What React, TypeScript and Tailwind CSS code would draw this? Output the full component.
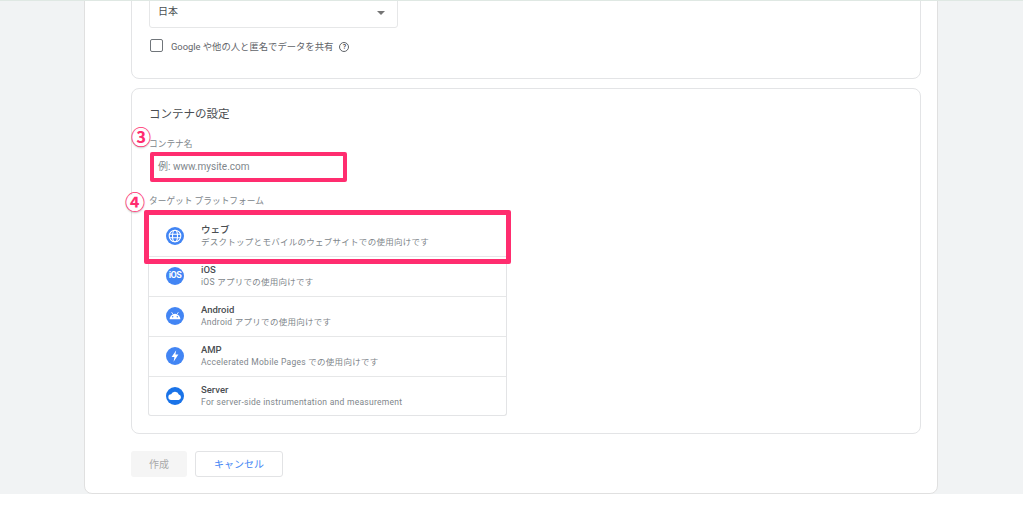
const rows = [
  { name: "ウェブ", desc: "デスクトップとモバイルのウェブサイトでの使用向けです", icon: <GlobeIcon /> },
  { name: "iOS", desc: "iOS アプリでの使用向けです", icon: <IosIcon /> },
  { name: "Android", desc: "Android アプリでの使用向けです", icon: <AndroidIcon /> },
  { name: "AMP", desc: "Accelerated Mobile Pages での使用向けです", icon: <AmpIcon /> },
  { name: "Server", desc: "For server-side instrumentation and measurement", icon: <CloudIcon /> },
]

function GlobeIcon() {
  return (
    <svg width="18" height="18" viewBox="0 0 18 18">
      <circle cx="9" cy="9" r="9" fill="#4285f4" />
      <g fill="none" stroke="#fff" strokeWidth="1.1">
        <circle cx="9" cy="9" r="5.8" />
        <ellipse cx="9" cy="9" rx="2.5" ry="5.8" />
        <path d="M3.6 7.2h10.8M3.6 10.8h10.8" />
      </g>
    </svg>
  )
}

function IosIcon() {
  return (
    <div className="w-[18px] h-[18px] rounded-full bg-[#4285f4] flex items-center justify-center text-white text-[9px] tracking-[-0.5px] font-bold leading-none">
      iOS
    </div>
  )
}

function AndroidIcon() {
  return (
    <svg width="18" height="18" viewBox="0 0 18 18">
      <circle cx="9" cy="9" r="9" fill="#4285f4" />
      <path d="M3.6 12.2a5.4 5.4 0 0 1 10.8 0z" fill="#fff" />
      <path d="M5.6 5.2l1.2 1.8M12.4 5.2l-1.2 1.8" stroke="#fff" strokeWidth="0.8" />
      <circle cx="6.7" cy="9.8" r="0.7" fill="#4285f4" />
      <circle cx="11.3" cy="9.8" r="0.7" fill="#4285f4" />
    </svg>
  )
}

function AmpIcon() {
  return (
    <svg width="18" height="18" viewBox="0 0 18 18">
      <circle cx="9" cy="9" r="9" fill="#4285f4" />
      <path d="M10.2 3.2L5.6 10h2.8l-0.8 4.8L12.4 7.6H9.4z" fill="#fff" />
    </svg>
  )
}

function CloudIcon() {
  return (
    <svg width="18" height="18" viewBox="0 0 18 18">
      <circle cx="9" cy="9" r="9" fill="#1a73e8" />
      <path d="M5.4 13a2.9 2.9 0 0 1-0.3-5.8A4.1 4.1 0 0 1 12.8 7.6 2.75 2.75 0 0 1 12.7 13z" fill="#fff" />
    </svg>
  )
}

function Marker({ digit, className }: { digit: string; className: string }) {
  return (
    <div
      className={`absolute w-[18px] h-[18px] rounded-full bg-white shadow-[0_1px_2px_rgba(0,0,0,0.25)] flex items-center justify-center text-[#ff2d6f] text-[20px] font-bold leading-none ${className}`}
    >
      {digit}
    </div>
  )
}

export default function App() {
  return (
    <div className="relative w-[1024px] h-[509px] overflow-hidden bg-white font-['Roboto','Noto_Sans_CJK_JP',sans-serif] text-[#3c4043]">
      <div className="h-[494px] mr-px bg-[#f1f3f4] border-t border-[#dfe8e3] overflow-hidden">
        <div className="ml-[84px] w-[854px] h-[520px] -mt-[27px] bg-white border border-[#e0e0e0] rounded-lg pl-[46px] pr-[16px] pt-[1px]">
          <section className="h-[103px] border border-[#e3e4e6] rounded-lg pl-[17px]">
            <div className="mt-[1px] w-[249px] h-[50px] border border-[#e6e7e8] rounded-[3px] flex items-end justify-between pl-[8px] pr-[12px] pb-[7px]">
              <span className="text-[10px] leading-[16px] text-[#4a4e52]">日本</span>
              <span className="w-0 h-0 mb-[5px] border-x-[4px] border-x-transparent border-t-[4px] border-t-[#757575]" />
            </div>
            <div className="flex items-start mt-[11px] ml-[1px]">
              <span className="w-[13px] h-[13px] border-[1.5px] border-[#70757a] rounded-[2px]" />
              <span className="ml-[8px] text-[9.33px] leading-[16px] text-[#5f6368]">Google や他の人と匿名でデータを共有</span>
              <span className="ml-[6px] mt-[3px] w-[10px] h-[10px] rounded-full border border-[#5f6368] flex items-center justify-center text-[7px] font-medium leading-none">?</span>
            </div>
          </section>

          <section className="mt-[9px] h-[346px] border border-[#e3e4e6] rounded-lg pl-[17px] pt-[17px]">
            <h2 className="text-[11.5px] leading-[16px] font-normal text-[#4a4e52]">コンテナの設定</h2>
            <p className="mt-[16px] text-[8.7px] leading-[12px] text-[#80868b]">コンテナ名</p>
            <div className="mt-[5px] ml-[3px] w-[191px] h-[23px] flex items-center pl-[6px] text-[10px] text-[#80868b]">
              例: www.mysite.com
            </div>
            <p className="mt-[18px] mb-[10px] text-[8.7px] leading-[11px] text-[#80868b]">ターゲット プラットフォーム</p>
            <div className="w-[359px] border border-[#e3e4e6] border-t-0 rounded-b-[3px] -ml-px">
              {rows.map((row, i) => (
                <div
                  key={row.name}
                  className={`flex items-center pl-[17px] ${i < rows.length - 1 ? "h-[40px] border-b border-[#e6e7e8]" : "h-[38px] pt-[1px]"}`}
                >
                  <div className="mb-[2px]">{row.icon}</div>
                  <div className="ml-[17px] mb-[2px]">
                    <div className="text-[9.5px] leading-[12px] font-medium text-[#4a4e52]">{row.name}</div>
                    <div className="text-[8.5px] leading-[12px] tracking-[0.27px] text-[#80868b]">{row.desc}</div>
                  </div>
                </div>
              ))}
            </div>
          </section>

          <div className="mt-[17px] flex gap-[8px]">
            <button className="w-[56px] h-[26px] rounded-[3px] bg-[#f5f5f5] text-[10px] text-[#a9a9a9]">作成</button>
            <button className="w-[88px] h-[26px] rounded-[3px] border border-[#e2e3e5] bg-white text-[10px] text-[#4285f4]">キャンセル</button>
          </div>
        </div>
      </div>

      {/* annotations drawn over the screenshot */}
      <div className="absolute left-[150px] top-[152px] w-[197px] h-[30px] border-[4px] border-[#ff2d6f] rounded-[2px]" />
      <div className="absolute left-[144px] top-[210px] w-[367px] h-[54px] border-[5px] border-[#ff2d6f] rounded-[2px]" />
      <Marker digit="③" className="left-[132px] top-[129px]" />
      <Marker digit="④" className="left-[126px] top-[194px]" />
    </div>
  )
}
